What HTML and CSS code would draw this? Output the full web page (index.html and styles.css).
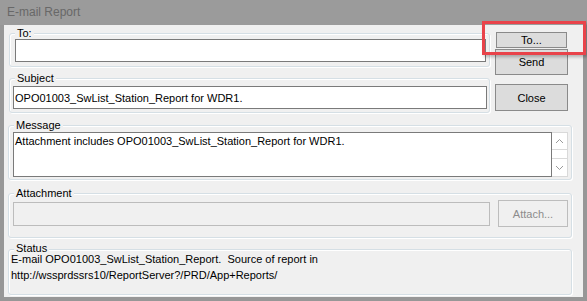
FILE: index.html
```html
<!DOCTYPE html>
<html lang="en">
<head>
  <meta charset="UTF-8" />
  <title>E-mail Report</title>
  <link rel="stylesheet" href="styles.css">
</head>
<body>
  <div class="window">
    <div class="titlebar">E-mail Report</div>

    <div class="client">
      <div class="top-row">
        <div class="fields">
          <!-- To -->
          <div class="group group-to">
            <span class="caption">To:</span>
            <input class="textbox to-box" type="text" />
          </div>
          <!-- Subject -->
          <div class="group group-subject">
            <span class="caption">Subject</span>
            <input class="textbox subject-box" type="text" value="OPO01003_SwList_Station_Report for WDR1." />
          </div>
        </div>
        <div class="buttons">
          <button class="btn btn-to">To...</button>
          <button class="btn btn-send">Send</button>
          <button class="btn btn-close">Close</button>
        </div>
      </div>

      <!-- Message -->
      <div class="group group-message">
        <span class="caption">Message</span>
        <div class="memo-row">
          <div class="memo">Attachment includes OPO01003_SwList_Station_Report for WDR1.</div>
          <div class="scrollbar">
            <div class="sb-btn sb-up">
              <svg width="9" height="6" viewBox="0 0 9 6"><polyline points="1,5 4.5,1.5 8,5" fill="none" stroke="#9a9a9a" stroke-width="1"/></svg>
            </div>
            <div class="sb-track"></div>
            <div class="sb-btn sb-down">
              <svg width="9" height="6" viewBox="0 0 9 6"><polyline points="1,1 4.5,4.5 8,1" fill="none" stroke="#9a9a9a" stroke-width="1"/></svg>
            </div>
          </div>
        </div>
      </div>

      <!-- Attachment -->
      <div class="group group-attach">
        <span class="caption">Attachment</span>
        <div class="attach-row">
          <input class="textbox attach-box" type="text" disabled />
          <button class="btn btn-attach" disabled>Attach...</button>
        </div>
      </div>

      <!-- Status -->
      <div class="group group-status">
        <span class="caption caption-status">Status</span>
        <div class="status-line first">E-mail OPO01003_SwList_Station_Report.&nbsp; Source of report in</div>
        <div class="status-line">http://wssprdssrs10/ReportServer?/PRD/App+Reports/</div>
      </div>
    </div>

    <div class="highlight"></div>
  </div>
</body>
</html>
```

FILE: styles.css
```css
* { box-sizing: border-box; }
body { margin: 0; background: #fff; font-family: 'Liberation Sans', Arial, sans-serif; font-size: 11px; color: #000; }

.window {
  position: relative;
  width: 587px;
  height: 301px;
  background: #f0f0f0;
  border-style: solid;
  border-color: #979797;
  border-width: 0 4px 4px 4px;
}
.titlebar {
  height: 25px;
  margin: 0 -4px;
  padding-left: 7px;
  background: #9b9b9b;
  color: #686868;
  font-size: 12px;
  line-height: 25px;
}

.client { padding-left: 4px; }

/* Top: fields + buttons */
.top-row { display: flex; margin-left: 1px; }
.fields { width: 481px; }
.buttons { display: flex; flex-direction: column; width: 73px; margin-left: 5px; }

/* Group boxes */
.group {
  position: relative;
  border: 1px solid #d5dfe5;
  border-radius: 3px;
  box-shadow: inset 1px 1px 0 #fff, 1px 1px 0 #fff;
}
.caption {
  position: absolute;
  top: -6px;
  left: 5px;
  padding: 0 2px;
  line-height: 11px;
  background: #f0f0f0;
}
.caption-status { top: -7px; line-height: 10px; }
.group-to { margin-top: 8px; height: 34px; padding: 5px 0 0 5px; }
.group-subject { margin-top: 11px; height: 35px; padding: 7px 0 0 3px; }
.group-message { margin-top: 12px; width: 564px; height: 55px; padding: 6px 0 0 4px; }
.group-attach { margin-top: 13px; width: 564px; height: 45px; padding: 6px 0 0 4px; }
.group-status { margin-top: 11px; width: 564px; height: 46px; padding: 0 0 0 2px; }

/* Text boxes */
.textbox {
  display: block;
  height: 23px;
  margin: 0;
  padding: 0 1px;
  border: 1px solid #7a7a7a;
  background: #fff;
  font: inherit;
  color: #000;
  outline: none;
}
.to-box { width: 471px; }
.subject-box { width: 474px; }
.attach-box { width: 477px; height: 24px; background: #f0f0f0; border-color: #bcbcbc; }

/* Buttons */
.btn {
  margin: 0;
  padding: 0;
  border: 1px solid #8a8a8a;
  background: #dcdcdc;
  font: inherit;
  color: #000;
}
.btn-to { margin: 7px 1px 0; width: 71px; height: 16px; line-height: 12px; }
.btn-send { margin-top: 1px; height: 26px; }
.btn-close { margin-top: 9px; height: 27px; }
.btn-attach { width: 70px; height: 27px; margin-left: 8px; background: #f0f0f0; border-color: #bdbdbd; color: #8c8c8c; }

/* Message memo */
.memo-row { display: flex; height: 45px; }
.memo { width: 539px; border: 1px solid #7a7a7a; background: #fff; padding: 2px 1px; line-height: 13px; }
.scrollbar { display: flex; flex-direction: column; width: 16px; border: 1px solid #d9d9d9; border-left: none; background: #fff; }
.sb-btn { height: 17px; display: flex; align-items: center; justify-content: center; }
.sb-up { border-bottom: 1px solid #d9d9d9; }
.sb-track { flex: 1; }
.sb-down { border-top: 1px solid #d9d9d9; height: 18px; }

/* Attachment */
.attach-row { display: flex; align-items: center; height: 27px; }

/* Status */
.status-line { line-height: 12px; margin-top: 4px; white-space: nowrap; }
.status-line.first { margin-top: 3px; }

/* Red highlight round the To... button */
.highlight {
  position: absolute;
  left: 478px;
  top: 21px;
  width: 104px;
  height: 34px;
  border: 3px solid #e9434a;
  box-shadow: 2px 2px 3px rgba(0,0,0,0.25);
}
```
